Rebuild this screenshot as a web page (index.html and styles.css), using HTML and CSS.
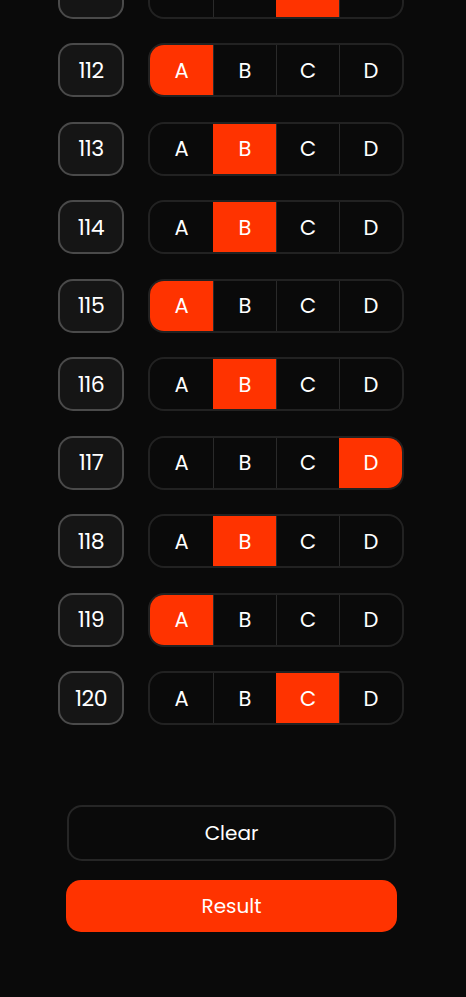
FILE: index.html
```html
<!DOCTYPE html>
<html>
<head>
<meta charset="utf-8">
<link rel="stylesheet" href="styles.css">
</head>
<body>
<div class="page">
  <div class="list">
    <div class="row"><div class="num">111</div><div class="opts"><div class="opt">A</div><div class="opt">B</div><div class="opt sel">C</div><div class="opt">D</div></div></div>
    <div class="row"><div class="num">112</div><div class="opts"><div class="opt sel">A</div><div class="opt">B</div><div class="opt">C</div><div class="opt">D</div></div></div>
    <div class="row"><div class="num">113</div><div class="opts"><div class="opt">A</div><div class="opt sel">B</div><div class="opt">C</div><div class="opt">D</div></div></div>
    <div class="row"><div class="num">114</div><div class="opts"><div class="opt">A</div><div class="opt sel">B</div><div class="opt">C</div><div class="opt">D</div></div></div>
    <div class="row"><div class="num">115</div><div class="opts"><div class="opt sel">A</div><div class="opt">B</div><div class="opt">C</div><div class="opt">D</div></div></div>
    <div class="row"><div class="num">116</div><div class="opts"><div class="opt">A</div><div class="opt sel">B</div><div class="opt">C</div><div class="opt">D</div></div></div>
    <div class="row"><div class="num">117</div><div class="opts"><div class="opt">A</div><div class="opt">B</div><div class="opt">C</div><div class="opt sel">D</div></div></div>
    <div class="row"><div class="num">118</div><div class="opts"><div class="opt">A</div><div class="opt sel">B</div><div class="opt">C</div><div class="opt">D</div></div></div>
    <div class="row"><div class="num">119</div><div class="opts"><div class="opt sel">A</div><div class="opt">B</div><div class="opt">C</div><div class="opt">D</div></div></div>
    <div class="row"><div class="num">120</div><div class="opts"><div class="opt">A</div><div class="opt">B</div><div class="opt sel">C</div><div class="opt">D</div></div></div>
  </div>
  <div class="actions">
    <button class="btn clear">Clear</button>
    <button class="btn result">Result</button>
  </div>
</div>
</body>
</html>
```
FILE: styles.css
```css
html, body {
  margin: 0;
  padding: 0;
  background: #0a0a0a;
  height: 100%;
  overflow: hidden;
}
body {
  font-family: "Poppins", "Inter", "Noto Sans", sans-serif;
  color: #ffffff;
}
.page {
  display: flex;
  flex-direction: column;
}
.list {
  margin-top: -35.5px;
  margin-left: 58px;
  width: 346px;
  display: flex;
  flex-direction: column;
  gap: 24.5px;
}
.row {
  display: flex;
  gap: 24px;
  height: 54px;
}
.num {
  box-sizing: border-box;
  width: 66px;
  height: 54px;
  border: 2px solid #4a4a4a;
  border-radius: 15px;
  background: #151515;
  display: flex;
  align-items: center;
  justify-content: center;
  font-size: 22px;
  letter-spacing: -0.5px;
}
.opts {
  box-sizing: border-box;
  width: 256px;
  height: 54px;
  border: 2px solid #222222;
  border-radius: 16px;
  overflow: hidden;
  display: grid;
  grid-template-columns: repeat(4, 1fr);
  background: #0a0a0a;
}
.opt {
  display: flex;
  align-items: center;
  justify-content: center;
  font-size: 21px;
  border-left: 1px solid #2a2a2a;
}
.opt:first-child {
  border-left: none;
}
.opt.sel {
  background: #ff3300;
  border-left-color: #ff3300;
}
.actions {
  margin-top: 80px;
  margin-left: 66px;
  width: 331px;
  display: flex;
  flex-direction: column;
  gap: 19px;
}
.btn {
  font-family: inherit;
  color: #ffffff;
  font-size: 20px;
  border-radius: 15px;
  cursor: pointer;
}
.clear {
  box-sizing: border-box;
  margin: 0 1px;
  width: 329px;
  height: 56px;
  background: #0a0a0a;
  border: 2px solid #262626;
}
.result {
  height: 52px;
  background: #ff3300;
  border: none;
}
```
